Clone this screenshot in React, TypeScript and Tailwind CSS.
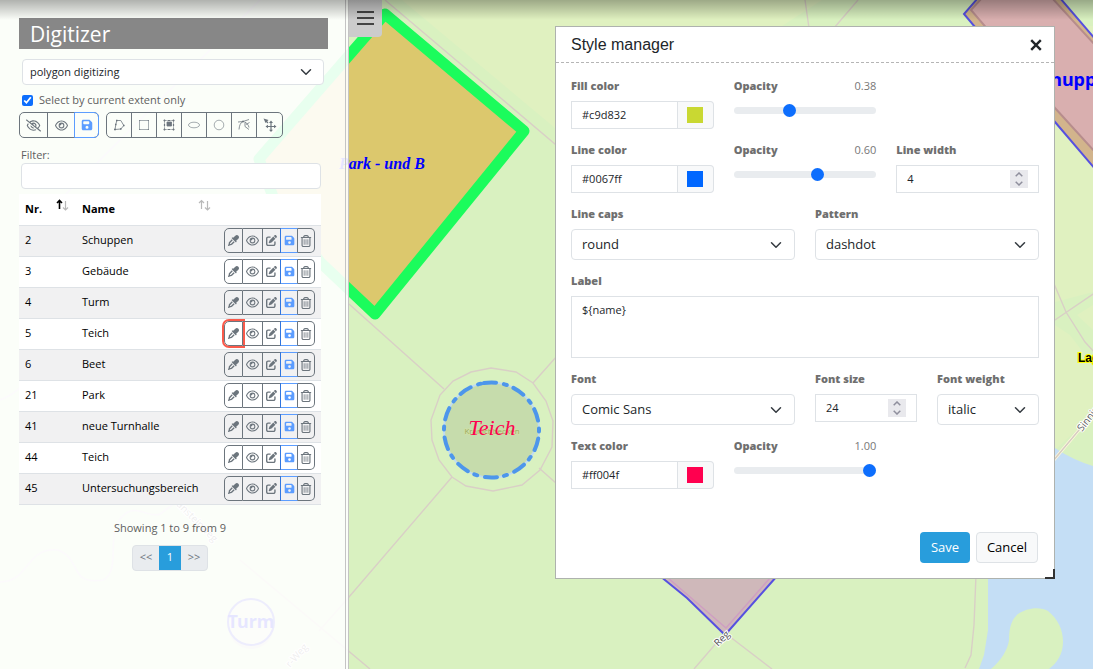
import { useState, type ReactNode } from "react";
import { clsx } from "clsx";
import {
  FaEyeDropper,
  FaFloppyDisk,
  FaPenToSquare,
  FaRegEye,
  FaRegEyeSlash,
  FaRegTrashCan,
} from "react-icons/fa6";

const features = [
  { nr: 2, name: "Schuppen" },
  { nr: 3, name: "Gebäude" },
  { nr: 4, name: "Turm" },
  { nr: 5, name: "Teich" },
  { nr: 6, name: "Beet" },
  { nr: 21, name: "Park" },
  { nr: 41, name: "neue Turnhalle" },
  { nr: 44, name: "Teich" },
  { nr: 45, name: "Untersuchungsbereich" },
];

// feature whose style is being edited
const editedNr = 5;

const rowActions = [
  { title: "Edit style", icon: FaEyeDropper, width: "w-[19px]", size: 11 },
  { title: "Toggle visibility", icon: FaRegEye, width: "w-5", size: 13 },
  { title: "Edit attributes", icon: FaPenToSquare, width: "w-[18px]", size: 11 },
  { title: "Save feature", icon: FaFloppyDisk, width: "w-[17px]", size: 11, save: true },
  { title: "Delete feature", icon: FaRegTrashCan, width: "w-[17px]", size: 12 },
];

function ToolIcon({ children }: { children: ReactNode }) {
  return (
    <svg viewBox="0 0 14 14" className="size-3.5" fill="none" stroke="currentColor" strokeWidth=".8">
      {children}
    </svg>
  );
}

const drawTools = [
  {
    title: "Draw polygon",
    icon: (
      <ToolIcon>
        <path d="M3 11.500 3.800 6.500 4.800 2.500h4l3 5-3 3.500z" />
        <path d="M2 11.500h2M4 2.500h1.500M11 7.500h1.500M3 6.500h1.500M8 11h1.500" strokeWidth="1.300" />
      </ToolIcon>
    ),
  },
  {
    title: "Draw rectangle",
    icon: (
      <ToolIcon>
        <path d="M2.500 2.500h9v9h-9z" strokeWidth=".6" />
        <path d="M2 2.500h1.200M10.800 2.500H12M2 11.500h1.200M10.800 11.500H12" />
      </ToolIcon>
    ),
  },
  {
    title: "Draw box",
    icon: (
      <ToolIcon>
        <path d="M2.500 2.500h9v9h-9z" strokeWidth=".5" />
        <path d="M5 4h4.500v4H5z" fill="currentColor" />
        <path d="M1.500 2.500h2M6 2.500h2M10.500 2.500h2M1.500 11.500h2M6 11.500h2M10.500 11.500h2M2.500 1.500v2M11.500 1.500v2M2.500 10.500v2M11.500 10.500v2M2.500 6v2M11.500 6v2" strokeWidth="1.200" />
      </ToolIcon>
    ),
  },
  {
    title: "Draw ellipse",
    icon: (
      <ToolIcon>
        <ellipse cx="7" cy="7" rx="5.500" ry="2.800" strokeWidth=".6" />
      </ToolIcon>
    ),
  },
  {
    title: "Draw circle",
    icon: (
      <ToolIcon>
        <circle cx="7" cy="7" r="4.800" strokeWidth=".6" />
      </ToolIcon>
    ),
  },
  {
    title: "Modify",
    icon: (
      <ToolIcon>
        <path d="M2 11.500C2.300 7.500 3.500 4.500 6 3.500M1 4l5-.5 6-2" />
        <path d="M7.500 4c2.500 1 4 3 4.500 5.500M8 4.500v4l4 3M9 6.500l3.500-2" />
        <path d="M5 3.500h2" strokeWidth="1.600" />
      </ToolIcon>
    ),
  },
  {
    title: "Move",
    icon: (
      <ToolIcon>
        <path d="M.5.500 5.500 2 2.500 5z" fill="currentColor" stroke="none" />
        <path d="M3 3l2 2M8 4v9M3.500 8.500h9" strokeWidth="1.200" />
        <path d="m8 2.500 2 2.500H6zM8 14l-2-2.200h4zM2.500 8.500 5 6.700v3.600zM13.500 8.500 11 6.700v3.600z" fill="currentColor" stroke="none" />
      </ToolIcon>
    ),
  },
];

function SelectBox({
  id,
  label,
  options,
  small,
}: {
  id: string;
  label?: string;
  options: string[];
  small?: boolean;
}) {
  return (
    <div className="relative">
      <select
        id={id}
        aria-label={label}
        className={clsx(
          "block w-full appearance-none rounded border border-[#dee2e6] bg-white text-[#212529]",
          small ? "h-[26px] px-[7px] text-[11px]" : "h-[31px] px-2.5 pt-px text-[13px]"
        )}
      >
        {options.map((option) => (
          <option key={option}>{option}</option>
        ))}
      </select>
      <svg
        viewBox="0 0 16 16"
        className={clsx(
          "pointer-events-none absolute inset-y-0 my-auto size-3",
          small ? "right-3" : "right-[13px]"
        )}
        fill="none"
        stroke="#343a40"
        strokeWidth="2"
        strokeLinecap="round"
        strokeLinejoin="round"
      >
        <path d="m2 5 6 6 6-6" />
      </svg>
    </div>
  );
}

function Field({ id, label, children }: { id: string; label: string; children: ReactNode }) {
  return (
    <div>
      <label htmlFor={id} className="mb-1.5 block text-[11px] leading-[18px] font-extrabold text-[#6f6f6f]">
        {label}
      </label>
      {children}
    </div>
  );
}

function ColorField({ id, label, value, swatch }: { id: string; label: string; value: string; swatch: string }) {
  return (
    <Field id={id} label={label}>
      <div className="flex h-7">
        <input
          id={id}
          defaultValue={value}
          className="w-full min-w-0 border border-[#dee2e6] bg-white px-2.5 text-[11px] text-[#212529]"
        />
        <button
          type="button"
          title="Pick color"
          className="flex w-9 shrink-0 items-center justify-center rounded-r border border-l-0 border-[#dee2e6] bg-[#f8f9fa]"
        >
          <span className={clsx("size-4", swatch)} />
        </button>
      </div>
    </Field>
  );
}

function OpacityField({ id, initial }: { id: string; initial: number }) {
  const [value, setValue] = useState(initial);

  return (
    <div>
      <div className="mb-1.5 flex justify-between text-[11px] leading-[18px] text-[#777]">
        <label htmlFor={id} className="font-extrabold text-[#6f6f6f]">Opacity</label>
        <output htmlFor={id}>{value.toFixed(2)}</output>
      </div>
      <input
        id={id}
        type="range"
        min={0}
        max={1}
        step={0.01}
        value={value}
        onChange={(e) => setValue(Number(e.target.value))}
        className="block h-[18px] w-full appearance-none bg-transparent [&::-webkit-slider-runnable-track]:h-[7px] [&::-webkit-slider-runnable-track]:rounded-full [&::-webkit-slider-runnable-track]:bg-[#e9ecef] [&::-webkit-slider-thumb]:-mt-[3px] [&::-webkit-slider-thumb]:size-[13px] [&::-webkit-slider-thumb]:appearance-none [&::-webkit-slider-thumb]:rounded-full [&::-webkit-slider-thumb]:bg-[#0d6efd]"
      />
    </div>
  );
}

function NumberField({ id, label, initial }: { id: string; label: string; initial: number }) {
  const [value, setValue] = useState(initial);

  return (
    <Field id={id} label={label}>
      <div className="flex h-7 items-center border border-[#dee2e6] bg-white px-2.5">
        <input
          id={id}
          type="number"
          value={value}
          onChange={(e) => setValue(Number(e.target.value))}
          className="w-full min-w-0 appearance-none text-[11px] text-[#212529] outline-none [&::-webkit-inner-spin-button]:appearance-none"
        />
        <div className="flex w-[18px] shrink-0 flex-col bg-[#e9e9ed]">
          <button
            type="button"
            aria-label="Increase"
            onClick={() => setValue(value + 1)}
            className="flex h-[9px] items-center justify-center"
          >
            <svg viewBox="0 0 8 5" className="h-[5px] w-2" fill="none" stroke="#8f8f9d" strokeWidth="1.500">
              <path d="m.7 4.300L4 1l3.300 3.300" />
            </svg>
          </button>
          <button
            type="button"
            aria-label="Decrease"
            onClick={() => setValue(value - 1)}
            className="flex h-[9px] items-center justify-center"
          >
            <svg viewBox="0 0 8 5" className="h-[5px] w-2" fill="none" stroke="#8f8f9d" strokeWidth="1.500">
              <path d="M.7.700 4 4 7.300.700" />
            </svg>
          </button>
        </div>
      </div>
    </Field>
  );
}

function MapView() {
  return (
    <svg
      viewBox="0 0 1093 669"
      preserveAspectRatio="xMinYMin slice"
      className="absolute inset-0 h-full w-full bg-[#d9f1c0]"
      aria-hidden="true"
    >
      {/* meadows */}
      <g fill="#e0f1c0">
        <path d="M402 0h420l-40 26H600v120h-27L555 128z" />
        <path d="M1040 26h53v266l-38 10h-15z" />
        <path d="M1055 325l15 10 23 30v50l-38 35z" />
        <path d="M1077 315l16-10v25z" />
      </g>

      {/* water */}
      <path d="M1055 448q18 12 38 18v203H979l5-14 4-25v-52l40-20z" fill="#c4def5" />
      <path d="M991 669c10-8 17-20 18-29 0-15 4-22 9-26 8-6 22-8 30-3 10 8 15 19 15 31s-6 21-14 27z" fill="#d9f1c0" />

      {/* paths */}
      <g fill="none" stroke="#d9cfc6" strokeWidth="1.400">
        <path d="M385 0l190 161M349 304l95 85M533 383l24-27M539 468l18 16M452 477L349 597l-30 34M240 560l130 109M725 633l47 36M725 633l-31 36" />
        <path d="m491 368 25 4 17 11 13 18 7 20-1 26-12 23-18 15-29 6-27-5-14-9-13-17-7-20-1-20 9-25 13-14 18-9z" />
        <path d="M976 575l-2 50-3 30-6 13M805 0l4 28M858 0l-24 28M1052 279l14 33 19 30 10 11M1052 322l44-30" />
      </g>
      <path d="M1053 461l42-50" stroke="#fff9dc" strokeWidth="3" />
      <path d="M1053 461l42-50" stroke="#d5ccc2" strokeWidth="1.500" />
      <path d="M0 400q20-8 25-20M0 582c30 0 25-35 58-32 25 10 10 35 45 30 20-10 0-50 22-66 12-10 25 5 35 0l30-22M60 200l200-200" fill="none" stroke="#ddd0e4" strokeWidth="1.500" />

      {/* park */}
      <path
        d="M385 14 524 131 375 314 321 263 276 205 259 159z"
        fill="#dcc86d"
        stroke="#1bfc5c"
        strokeWidth="11"
        strokeLinejoin="round"
      />
      <text x="339" y="169" fill="#00f" className="font-['Liberation_Serif',serif] text-[16px] font-bold italic">
        Park - und B
      </text>

      {/* teich */}
      <circle cx="491.500" cy="430" r="47.500" fill="#c6dcac" stroke="#c1dcf0" strokeWidth="2" />
      <circle
        cx="491.500"
        cy="430"
        r="47.500"
        fill="none"
        stroke="#4d96eb"
        strokeWidth="4"
        strokeLinecap="round"
        strokeDasharray="12 8 3 7.200"
        transform="rotate(-99 491.500 430)"
      />
      <text
        x="492"
        y="434"
        textAnchor="middle"
        fill="#97a964"
        stroke="#d6e3a2"
        strokeWidth="1"
        paintOrder="stroke"
        className="font-['Open_Sans',sans-serif] text-[8px]"
      >
        Kranichbecken
      </text>
      <text
        x="492"
        y="435"
        textAnchor="middle"
        fill="#ff004f"
        className="font-['Liberation_Serif',serif] text-[22px] italic"
      >
        Teich
      </text>

      {/* buildings */}
      <path d="M662 578 687 598 725 635 775 578z" fill="#cfb8ba" />
      <path d="M668 578 726 628 770 578" fill="none" stroke="#cf9ec2" strokeWidth="1.500" />
      <path d="M660 576 687 598 725 635 777 576" fill="none" stroke="#5650e0" strokeWidth="2" />
      <path d="M978-2 964 14 1055 122 1096 170V40L1060-2z" fill="#d2b48c" stroke="#5650e0" strokeWidth="2" />
      <path d="M982-2 971 10 1055 108 1096 153V46L1052-2z" fill="#d9afaf" stroke="#b78d8d" strokeWidth="2" />
      <text x="1031" y="86" fill="#00f" className="font-['Noto_Sans',sans-serif] text-[18px] font-bold">
        Schuppen
      </text>

      <circle cx="251" cy="626" r="23" fill="#d0d0c8" />
      <circle cx="251" cy="622" r="23" fill="#dfe6d0" stroke="#4a46e8" strokeWidth="2" />
      <text x="251" y="628" textAnchor="middle" fill="#00f" className="font-['Noto_Sans',sans-serif] text-[18px] font-bold">
        Turm
      </text>

      {/* street names */}
      <g fill="#555" stroke="#fff" strokeWidth="2" paintOrder="stroke" className="font-['Open_Sans',sans-serif] text-[10px]">
        <text transform="translate(718 647) rotate(-44)">Reg</text>
        <text transform="translate(1082 432) rotate(-52)">Sinninger</text>
        <text transform="translate(176 505) rotate(45)">ansteinweg</text>
        <text transform="translate(290 668) rotate(-48)">r-Weg</text>
      </g>
      <text
        x="1078"
        y="362"
        stroke="#ff0"
        strokeWidth="2"
        paintOrder="stroke"
        className="font-['Liberation_Sans',sans-serif] text-[12px] font-bold"
      >
        Lager
      </text>
    </svg>
  );
}

function SortArrows({ ascending }: { ascending?: boolean }) {
  return (
    <svg viewBox="0 0 13 12" className="-mt-0.5 h-3 w-[13px]" fill="none" stroke="#b9b9b9" strokeWidth="1.200">
      <path
        d="M3.500 10V1.500M1 4l2.500-2.500L6 4"
        className={clsx(ascending && "stroke-black stroke-[1.6px]")}
      />
      <path d="M9.500 2v9M7 8.500 9.500 11 12 8.500" />
    </svg>
  );
}

function DigitizerPanel() {
  return (
    <aside className="flex min-h-screen w-[349px] shrink-0 flex-col border-r-4 border-double border-[#c4c4c4] bg-white/90 pt-[18px] pr-[17px] pl-[19px] text-[11px] text-[#5f5f5f]">
      <h1 className="h-[31px] bg-[#878787] pl-[11px] text-[21px] leading-[32px] text-white">Digitizer</h1>

      <div className="mt-2.5 mr-1 ml-[3px]">
        <SelectBox id="schema" label="Schema" options={["polygon digitizing", "line digitizing"]} small />
      </div>

      <label className="mt-1.5 ml-[3px] flex h-[18px] items-center gap-1.5">
        <input type="checkbox" defaultChecked className="size-[11px] accent-[#0d6efd]" />
        Select by current extent only
      </label>

      <div className="mt-[3px] flex gap-[7px] text-[#6c757d]">
        <div className="flex h-[26px] rounded-[5px] border border-[#6c757d]">
          <button type="button" title="Hide all" className="flex w-7 items-center justify-center border-r border-[#6c757d]">
            <FaRegEyeSlash size={15} />
          </button>
          <button type="button" title="Show all" className="flex w-[26px] items-center justify-center">
            <FaRegEye size={13} />
          </button>
          <button
            type="button"
            title="Save all"
            className="-my-px -mr-px flex w-[25px] items-center justify-center rounded-r-[5px] border border-[#5c9dff] text-[#5c9dff]"
          >
            <FaFloppyDisk size={12} />
          </button>
        </div>
        <div className="flex h-[26px] divide-x divide-[#6c757d] rounded-[5px] border border-[#6c757d]">
          {drawTools.map((tool) => (
            <button
              key={tool.title}
              type="button"
              title={tool.title}
              className="flex w-[25px] items-center justify-center"
            >
              {tool.icon}
            </button>
          ))}
        </div>
      </div>

      <div className="mt-2 mr-[7px] ml-0.5">
        <label htmlFor="filter" className="block leading-[17px]">Filter:</label>
        <input id="filter" type="search" className="block h-[26px] w-full rounded border border-[#dee2e6] bg-white px-2" />
      </div>

      <div className="mt-[5px] mr-[7px]">
        <table className="w-full border-collapse bg-white text-black">
          <thead>
            <tr className="h-[31px] border-b border-[#dee2e6] text-left">
              <th className="w-[57px] pl-1.5">
                <span className="flex justify-between pr-[7px]">
                  Nr.
                  <SortArrows ascending />
                </span>
              </th>
              <th className="pl-1.5">
                <span className="flex justify-between pr-[7px]">
                  Name
                  <SortArrows />
                </span>
              </th>
              <th className="w-[103px]" aria-label="Actions" />
            </tr>
          </thead>
          <tbody>
            {features.map((feature) => (
              <tr key={feature.nr} className="h-[31px] border-b border-[#dee2e6] odd:bg-[#f1f1f2]">
                <td className="pl-1.5">{feature.nr}</td>
                <td className="pl-1.5">{feature.name}</td>
                <td className="pl-1.5">
                  <div className="flex h-[25px] w-[91px] text-[#6c757d]">
                    {rowActions.map((action, i) => (
                      <button
                        key={action.title}
                        type="button"
                        title={action.title}
                        className={clsx(
                          "flex items-center justify-center border-y border-r",
                          action.width,
                          action.save ? "border-[#5c9dff] text-[#5c9dff]" : "border-[#6c757d]",
                          i === 0 && "rounded-l-[5px] border-l",
                          i === 2 && "border-r-[#2f75e0]",
                          i === 3 && "border-r-[#6c757d]",
                          i === 4 && "rounded-r-[5px]",
                          i === 0 && feature.nr === editedNr && "outline-2 outline-[#fa5a4b]"
                        )}
                      >
                        <action.icon size={action.size} className="shrink-0" />
                      </button>
                    ))}
                  </div>
                </td>
              </tr>
            ))}
          </tbody>
        </table>

        <p className="mt-3.5 text-center leading-[17px]">Showing 1 to 9 from 9</p>

        <nav aria-label="Pages" className="mt-[9px] flex justify-center">
          <div className="flex h-[26px] overflow-hidden rounded border border-[#dee2e6] bg-[#e9ecef]">
            <button type="button" className="w-[26px] text-[#6c757d]">&lt;&lt;</button>
            <button type="button" className="-my-px w-[22px] bg-[#289ddc] text-white">1</button>
            <button type="button" className="w-[26px] text-[#6c757d]">&gt;&gt;</button>
          </div>
        </nav>
      </div>
    </aside>
  );
}

function StyleManager() {
  return (
    <section
      role="dialog"
      aria-labelledby="style-manager-title"
      className="absolute top-[26px] left-[555px] w-[500px] border border-[#aeb2ae] bg-white text-[#212529]"
    >
      <header className="flex h-9 items-center justify-between border-b border-dashed border-[#b5b5b5] pr-3 pl-[15px]">
        <h2 id="style-manager-title" className="font-['Liberation_Sans',Arial,sans-serif] text-base">
          Style manager
        </h2>
        <button type="button" aria-label="Close">
          <svg viewBox="0 0 12 12" className="size-3" fill="none" stroke="#212529" strokeWidth="2.400">
            <path d="m1.200 1.200 9.600 9.600M10.800 1.200l-9.600 9.600" />
          </svg>
        </button>
      </header>

      <form className="px-[15px] pt-3.5 pb-[15px]" onSubmit={(e) => e.preventDefault()}>
        <div className="grid gap-3">
          <div className="grid grid-cols-3 gap-5">
            <ColorField id="fill-color" label="Fill color" value="#c9d832" swatch="bg-[#c9d832]" />
            <OpacityField id="fill-opacity" initial={0.38} />
          </div>
          <div className="grid grid-cols-3 gap-5">
            <ColorField id="line-color" label="Line color" value="#0067ff" swatch="bg-[#0067ff]" />
            <OpacityField id="line-opacity" initial={0.6} />
            <NumberField id="line-width" label="Line width" initial={4} />
          </div>
          <div className="grid grid-cols-2 gap-5">
            <Field id="line-caps" label="Line caps">
              <SelectBox id="line-caps" options={["round", "butt", "square"]} />
            </Field>
            <Field id="pattern" label="Pattern">
              <SelectBox id="pattern" options={["dashdot", "solid", "dot", "dash"]} />
            </Field>
          </div>
          <Field id="label" label="Label">
            <textarea
              id="label"
              defaultValue="${name}"
              className="block h-[62px] w-full resize-none border border-[#dee2e6] bg-white px-2.5 py-1 text-[11px] leading-[17px]"
            />
          </Field>
          <div className="grid grid-cols-4 gap-5">
            <div className="col-span-2">
              <Field id="font" label="Font">
                <SelectBox id="font" options={["Comic Sans", "Arial", "Verdana"]} />
              </Field>
            </div>
            <NumberField id="font-size" label="Font size" initial={24} />
            <Field id="font-weight" label="Font weight">
              <SelectBox id="font-weight" options={["italic", "regular", "bold"]} />
            </Field>
          </div>
          <div className="grid grid-cols-3 gap-5">
            <ColorField id="text-color" label="Text color" value="#ff004f" swatch="bg-[#ff004f]" />
            <OpacityField id="text-opacity" initial={1} />
          </div>
        </div>

        <div className="mt-[43px] mr-px flex justify-end gap-1.5 text-[13px]">
          <button type="submit" className="h-[31px] w-[50px] rounded bg-[#289ddc] pt-px text-white">
            Save
          </button>
          <button type="button" className="h-[31px] w-[62px] rounded border border-[#dee2e6] bg-[#f8f9fa] pt-px text-black">
            Cancel
          </button>
        </div>
      </form>
      <span className="absolute -right-px -bottom-px size-2.5 border-r-2 border-b-2 border-[#333]" />
    </section>
  );
}

export default function App() {
  return (
    <main className="relative flex min-h-screen items-start overflow-hidden font-['Open_Sans',sans-serif]">
      <MapView />
      <div className="relative flex items-start">
        <DigitizerPanel />
        <button
          type="button"
          aria-label="Toggle menu"
          className="flex h-[37px] w-[33px] items-center justify-center rounded-br-sm bg-[#ccc] pb-0.5"
        >
          <span className="flex w-[17px] flex-col gap-1">
            <span className="h-0.5 bg-[#444]" />
            <span className="h-0.5 bg-[#444]" />
            <span className="h-0.5 bg-[#444]" />
          </span>
        </button>
      </div>
      <div className="pointer-events-none absolute inset-x-0 top-0 h-5 bg-linear-to-b from-black/30 to-transparent" />
      <StyleManager />
    </main>
  );
}
